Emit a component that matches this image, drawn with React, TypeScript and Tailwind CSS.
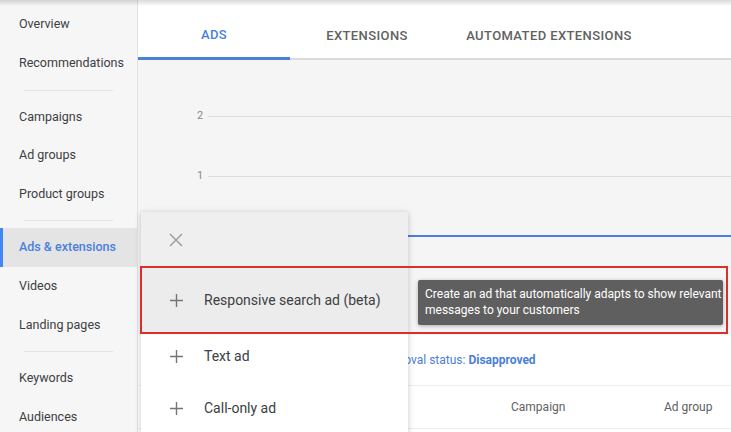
import React from 'react';

const navTop = ['Overview', 'Recommendations'];
const navMid = ['Campaigns', 'Ad groups', 'Product groups'];
const navAds = ['Ads & extensions', 'Videos', 'Landing pages'];
const navBottom = ['Keywords', 'Audiences'];

const NavItem: React.FC<{ label: string; active?: boolean }> = ({ label, active }) => (
  <div
    className={`relative h-[38.6px] flex items-center pl-[19px] text-[12.5px] ${
      active ? 'bg-[#e4e4e4] text-[#4a80e0] font-medium' : 'text-[#3c4043]'
    }`}
  >
    {active && <span className="absolute left-0 top-0 bottom-0 w-[3px] bg-[#4285f4]" />}
    {label}
  </div>
);

const Divider = () => (
  <div className="h-[15px] flex items-center px-[24px]">
    <div className="h-px w-full bg-[#e3e3e3]" />
  </div>
);

const PlusIcon = () => (
  <svg width="15" height="15" viewBox="0 0 15 15" className="shrink-0">
    <path d="M7.5 1v13M1 7.5h13" stroke="#757575" strokeWidth="1.4" />
  </svg>
);

const CloseIcon = () => (
  <svg width="14" height="14" viewBox="0 0 14 14">
    <path d="M1 1l12 12M13 1L1 13" stroke="#9e9e9e" strokeWidth="1.5" />
  </svg>
);

export default function App() {
  return (
    <div className="relative w-[731px] h-[432px] overflow-hidden flex bg-[#f5f5f5] font-['Roboto',sans-serif]">
      {/* Sidebar */}
      <aside className="w-[138px] shrink-0 bg-[#f6f6f6] border-r border-[#e2e2e2] pt-[5.5px]">
        {navTop.map((l) => <NavItem key={l} label={l} />)}
        <Divider />
        {navMid.map((l) => <NavItem key={l} label={l} />)}
        <Divider />
        {navAds.map((l, i) => <NavItem key={l} label={l} active={i === 0} />)}
        <Divider />
        {navBottom.map((l) => <NavItem key={l} label={l} />)}
      </aside>

      {/* Main */}
      <main className="flex-1 flex flex-col">
        <div className="h-[60px] bg-white border-b-2 border-[#dadada] flex items-stretch text-[13px] font-medium tracking-[0.4px]">
          <div className="w-[152px] flex items-center justify-center text-[#4a80d8] border-b-[3px] border-[#4a80d8] -mb-[2px] pt-[13px]">ADS</div>
          <div className="w-[154px] flex items-center justify-center text-[#616161] pt-[13px]">EXTENSIONS</div>
          <div className="w-[210px] flex items-center justify-center text-[#616161] pt-[13px]">AUTOMATED EXTENSIONS</div>
        </div>

        {/* Chart */}
        <div className="h-[275px] bg-[#f5f5f5] pt-[49px] pl-[59px] flex flex-col gap-[46px]">
          <div className="h-[14px] flex items-center gap-[5px]">
            <span className="w-[6px] text-[11px] text-[#8a8a8a]">2</span>
            <div className="flex-1 h-px bg-[#dcdcdc]" />
          </div>
          <div className="h-[14px] flex items-center gap-[5px]">
            <span className="w-[6px] text-[11px] text-[#8a8a8a]">1</span>
            <div className="flex-1 h-px bg-[#dcdcdc]" />
          </div>
          <div className="h-[14px] flex items-center gap-[5px]">
            <span className="w-[6px] text-[11px] text-[#8a8a8a]">0</span>
            <div className="flex-1 h-[2px] bg-[#4a80d8]" />
          </div>
        </div>

        {/* Table area */}
        <div className="flex-1 bg-white">
          <div className="h-[51px] flex items-center pl-[241px] border-b border-[#eeeeee] text-[12px] text-[#4a80d8]">
            Approval status:&nbsp;<span className="font-bold">Disapproved</span>
          </div>
          <div className="h-[43px] flex items-center border-b border-[#eeeeee] text-[12px] text-[#616161]">
            <div className="w-[373px]" />
            <div className="w-[153px]">Campaign</div>
            <div>Ad group</div>
          </div>
        </div>
      </main>

      {/* Create menu */}
      <div className="absolute left-[141px] top-[212px] w-[267px] h-[240px] bg-white shadow-[0_1px_6px_rgba(0,0,0,0.22)] text-[14px] text-[#3c4043]">
        <div className="h-[55px] bg-[#efefef] flex items-center pl-[28px]">
          <CloseIcon />
        </div>
        <div className="h-[66px] bg-[#ececec] flex items-center gap-[20px] pl-[28px]">
          <PlusIcon />
          <span>Responsive search ad (beta)</span>
        </div>
        <div className="h-[46px] flex items-center gap-[20px] pl-[28px]">
          <PlusIcon />
          <span>Text ad</span>
        </div>
        <div className="h-[58px] flex items-center gap-[20px] pl-[28px]">
          <PlusIcon />
          <span>Call-only ad</span>
        </div>
      </div>

      {/* Highlight box */}
      <div className="absolute left-[140px] top-[266px] w-[588px] h-[68px] border-2 border-[#d9302c]" />

      {/* Tooltip */}
      <div className="absolute left-[418px] top-[280px] w-[305px] h-[45px] bg-[#5f5f5f] rounded-[2px] shadow-[0_1px_4px_rgba(0,0,0,0.3)] px-[7px] py-[6px] text-[12px] leading-[16px] text-white whitespace-nowrap">
        Create an ad that automatically adapts to show relevant
        <br />
        messages to your customers
      </div>

      {/* Top header shadow */}
      <div className="absolute top-0 left-0 right-0 h-[6px] bg-gradient-to-b from-black/15 to-transparent" />
    </div>
  );
}
